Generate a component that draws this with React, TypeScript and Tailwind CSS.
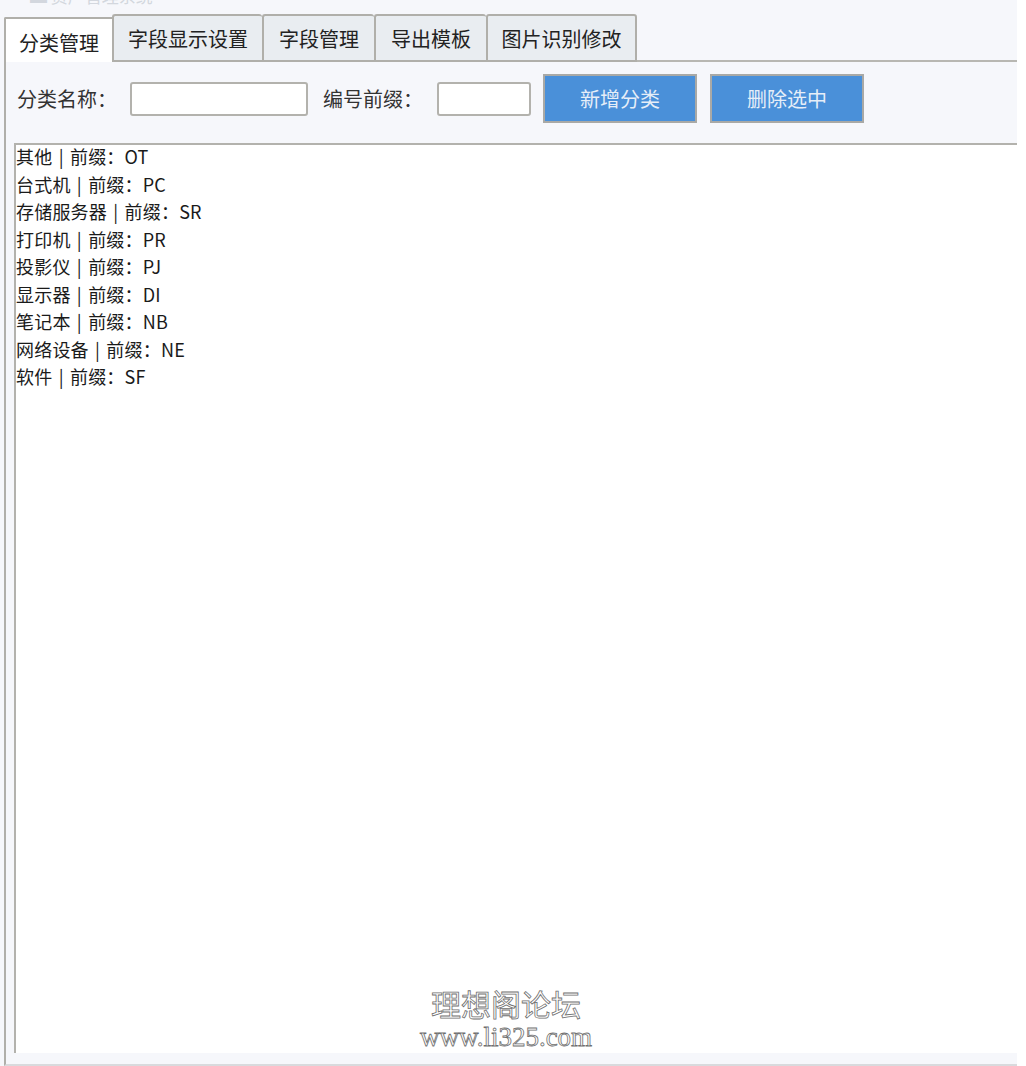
const tabs = ["字段显示设置", "字段管理", "导出模板", "图片识别修改"];
const tabWidths = ["w-[150px]", "w-[112px]", "w-[112px]", "w-[151px]"];

const categories = [
  { name: "其他", prefix: "OT" },
  { name: "台式机", prefix: "PC" },
  { name: "存储服务器", prefix: "SR" },
  { name: "打印机", prefix: "PR" },
  { name: "投影仪", prefix: "PJ" },
  { name: "显示器", prefix: "DI" },
  { name: "笔记本", prefix: "NB" },
  { name: "网络设备", prefix: "NE" },
  { name: "软件", prefix: "SF" },
];

function App() {
  return (
    <div className="relative w-[1026px] h-[1066px] bg-white overflow-hidden font-['Noto_Sans_CJK_SC','Noto_Sans',sans-serif] text-[#1f1f1f]">
      <div className="w-[1017px] h-[1066px] bg-[#f6f7fb] flex flex-col">
        {/* clipped window title */}
        <div className="h-[14px] overflow-hidden">
          <div className="-mt-[14px] pl-[30px] text-[17px] leading-[20px] text-[#d3d7de]">
            ▬ 资产管理系统
          </div>
        </div>

        {/* tab strip */}
        <div className="flex items-end h-[48px]">
          <div className="ml-[4px] w-[108px] h-[45px] bg-white border-l-2 border-t-2 border-[#b0afaa] rounded-tl-[2px] flex items-center justify-center pt-[4px] text-[20px] text-[#222]">
            分类管理
          </div>
          {tabs.map((t, i) => (
            <div
              key={t}
              className={`${tabWidths[i]} h-[48px] bg-[#e9edf1] border-l-2 border-t-2 border-b-2 ${
                i === tabs.length - 1 ? "border-r-2" : ""
              } border-[#b0afaa] rounded-t-[3px] flex items-center justify-center pt-[2px] text-[20px] text-[#222]`}
            >
              {t}
            </div>
          ))}
          <div className="flex-1 border-b-2 border-[#b8b7b2]" />
        </div>

        {/* panel */}
        <div className="ml-[4px] flex-1 flex flex-col border-l-2 border-[#b0afaa] border-b-2 border-b-[#d9dadd]">
          <div className="flex items-center pt-[12px] pb-[20px] pl-[11px] text-[20px] text-[#333]">
            <span>分类名称：</span>
            <div className="ml-[13px] w-[178px] h-[34px] bg-white border-2 border-[#b3b2ad] rounded-[3px]" />
            <span className="ml-[15px]">编号前缀：</span>
            <div className="ml-[14px] w-[94px] h-[34px] bg-white border-2 border-[#b3b2ad] rounded-[3px]" />
            <button className="ml-[12px] w-[154px] h-[49px] bg-[#4a90d9] border-2 border-[#a9a9a6] text-[20px] text-[#e6eef8]">
              新增分类
            </button>
            <button className="ml-[13px] w-[154px] h-[49px] bg-[#4a90d9] border-2 border-[#a9a9a6] text-[20px] text-[#e6eef8]">
              删除选中
            </button>
          </div>

          <div className="ml-[8px] h-[910px] bg-white border-t-2 border-l-2 border-[#b3b2ad] overflow-hidden">
            <div className="-mt-[2px] text-[18px] leading-[27.5px] text-[#1a1a1a]">
              {categories.map((c) => (
                <div key={c.prefix} className="whitespace-pre tracking-[0.2px]">
                  {c.name} <span className="mx-[2px]">|</span> 前缀：{c.prefix}
                </div>
              ))}
            </div>
          </div>
        </div>
      </div>

      {/* forum watermark */}
      <div className="absolute left-[420px] top-[988px] w-[172px] flex flex-col items-center text-white pointer-events-none">
        <div className="text-[30px] leading-[30px] [-webkit-text-stroke:0.8px_#707070] font-['Noto_Sans_CJK_SC',sans-serif]">
          理想阁论坛
        </div>
        <div className="mt-[6px] text-[27px] leading-[26px] [-webkit-text-stroke:0.8px_#707070] font-['Liberation_Serif',serif]">
          www.li325.com
        </div>
      </div>
    </div>
  );
}

export default App;
